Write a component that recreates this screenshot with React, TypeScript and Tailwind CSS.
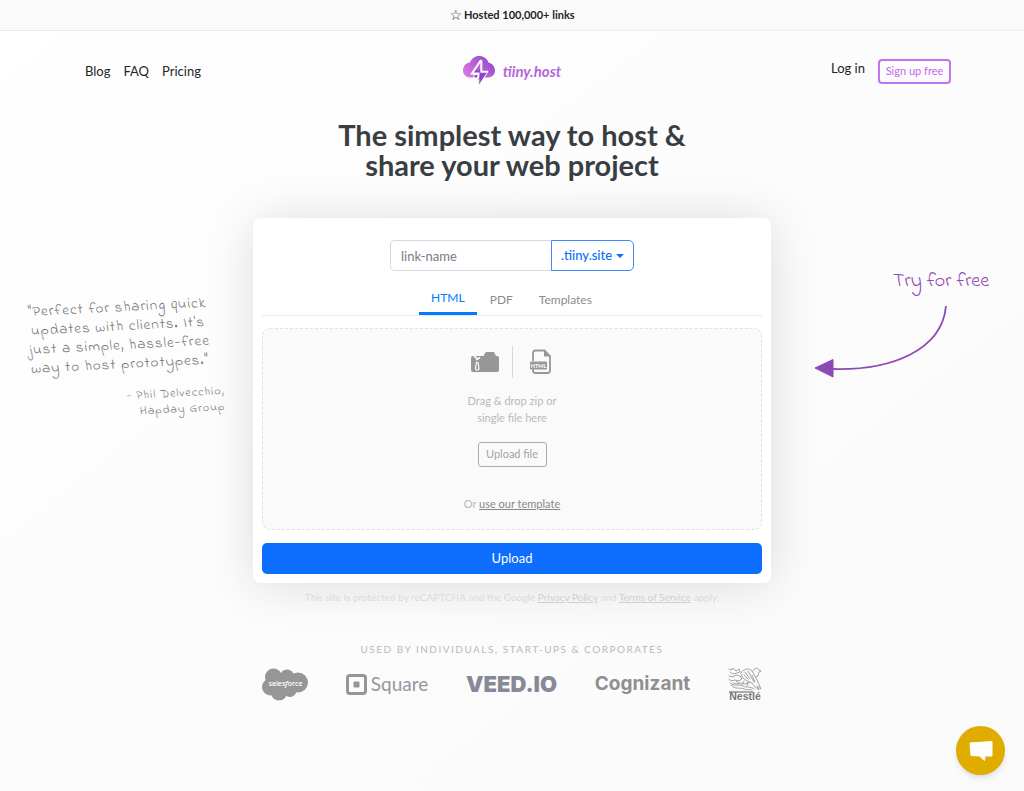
import type { ReactNode } from 'react'

const NAV_LINKS = ['Blog', 'FAQ', 'Pricing']

function CloudLogo() {
  return (
    <svg width="32" height="30" viewBox="0 0 32 30" aria-hidden="true">
      <defs>
        <linearGradient id="cloud" x1="0" y1="1" x2="1" y2="0.3">
          <stop offset="0" stopColor="#e07fe6" />
          <stop offset="1" stopColor="#9448c8" />
        </linearGradient>
        <linearGradient id="bolt" x1="0" y1="0" x2="0" y2="1">
          <stop offset="0.4" stopColor="#b966da" />
          <stop offset="0.6" stopColor="#9142c6" />
        </linearGradient>
      </defs>
      <path
        d="M7 21.500C3 21.500 0 18.500 0 14.500C0 10 3 7 7 6.500C8.500 2.500 12 0 16 0C20.500 0 24 2.500 25.500 6.500C29.500 7.500 32 11 32 14.500C32 18.500 29 21.500 25 21.500Z"
        fill="url(#cloud)"
      />
      <path d="M11 18.500H15.500L19 15.500H25L15.500 30L16 22H11Z" fill="#9142c6" stroke="#fdfdfd" strokeWidth="1" />
      <path d="M18.500 4L9 18H16L15.500 24L24 16H18.500Z" fill="url(#bolt)" />
      <path
        d="M18 4L9 17.500H15.500L15.200 22M18.300 4V15.800H25"
        fill="none"
        stroke="#fdfdfd"
        strokeWidth="2"
      />
    </svg>
  )
}

function ZipIcon() {
  return (
    <svg width="28" height="22" viewBox="0 0 28 22" aria-hidden="true">
      <path
        d="M2 5H13V3.500L15 1H23L25 5H26Q28 5 28 7V19Q28 21 26 21H2Q0 21 0 19V7Q0 5 2 5Z"
        fill="#979797"
      />
      <path d="M3 5.500L6 7M9 6.500L5 9" stroke="#fafafa" strokeWidth="1.800" fill="none" />
      <path d="M5.500 11.500H7L8 17Q8 19 6.200 19Q4.500 19 4.500 17Z" fill="none" stroke="#fafafa" strokeWidth="1.200" />
    </svg>
  )
}

function HtmlIcon() {
  return (
    <svg width="22" height="26" viewBox="0 0 22 26" aria-hidden="true">
      <path
        d="M3 12V4Q3 1.500 5.500 1.500H14.500L20 7V21.500Q20 24 17.500 24H5.500Q3 24 3 21.500V20"
        fill="none"
        stroke="#979797"
        strokeWidth="1.800"
      />
      <path d="M14 1V7.500H20.500Z" fill="#979797" />
      <rect x="0" y="12.500" width="17" height="8" rx="1" fill="#979797" />
      <text x="8.500" y="18.500" textAnchor="middle" fontSize="5.500" fontWeight="900" fontFamily="Lato" fill="#fafafa">
        HTML
      </text>
    </svg>
  )
}

function Arrow() {
  return (
    <svg width="135" height="74" viewBox="0 0 135 74" aria-hidden="true">
      <path d="M132 0C128 44 78 65 17 63" fill="none" stroke="#8e48b3" strokeWidth="1.800" />
      <path d="M1 62L19 53.500V71Z" fill="#8e48b3" stroke="#8e48b3" strokeLinejoin="round" />
    </svg>
  )
}

function Salesforce() {
  return (
    <svg width="46" height="33" viewBox="0 0 46 33" role="img" aria-label="Salesforce">
      <g fill="#969696">
        <circle cx="11.500" cy="9" r="8.500" />
        <circle cx="25" cy="8.500" r="7" />
        <circle cx="36" cy="14.500" r="10" />
        <circle cx="8.500" cy="19" r="8.500" />
        <circle cx="17" cy="24.500" r="8" />
        <circle cx="28" cy="22.500" r="6.500" />
        <rect x="10" y="8" width="24" height="16" />
      </g>
      <text x="23.500" y="17.500" textAnchor="middle" fontSize="7" fontFamily="Open Sans" fontWeight="600" fill="#fff">
        sales<tspan fontStyle="italic">f</tspan>orce
      </text>
    </svg>
  )
}

function SquareLogo() {
  return (
    <div className="flex items-center gap-1 font-[Lato] text-[19px] leading-6 text-[#94979a]">
      <svg width="21" height="21" viewBox="0 0 21 21" aria-hidden="true">
        <rect x="1.500" y="1.500" width="18" height="18" rx="2.500" fill="none" stroke="currentColor" strokeWidth="3" />
        <rect x="7.500" y="7.500" width="6" height="6" rx="1" fill="currentColor" />
      </svg>
      Square
    </div>
  )
}

function Nestle() {
  return (
    <svg width="34" height="34" viewBox="0 0 34 34" role="img" aria-label="Nestle">
      <g fill="none" stroke="#999" strokeWidth="0.900" strokeLinecap="round" strokeLinejoin="round">
        <path d="M1 2L4 3L5 1L8 4L11 2L12 5L9 6L5 7L2 5M1 9L5 10L8 8L12 9L14 12L11 14L7 13L3 14L1 12" />
        <path d="M13 6C15 2 20 1 23 3L26 7L29 13L33 22L29 19L31 23L27 20L24 16L19 14L15 11Z" />
        <path d="M17 5L22 12M20 4L26 15M16 8L20 12M24 8L27 15" />
        <path d="M25 4C26 1 30 0 31 3L33 4L31 5L30 9L28 10" />
        <path d="M2 16C6 20 11 17 15 19S22 19 26 22M3 18C7 23 12 20 16 22S21 21 24 23M5 16L9 17L13 16L17 17L21 16M8 14L12 17M16 14L14 18M20 15L19 19" />
      </g>
      <text x="17" y="33" textAnchor="middle" fontSize="10.500" fontWeight="700" fontFamily="Liberation Sans" fill="#777">
        Nestlé
      </text>
      <path d="M1 25H25" stroke="#777" strokeWidth="1.200" />
    </svg>
  )
}

function Tab({ active = false, children }: { active?: boolean; children: ReactNode }) {
  return (
    <button
      type="button"
      role="tab"
      aria-selected={active}
      className={
        active
          ? 'h-[31px] border-b-[3px] border-[#007bff] px-3 text-[#007bff]'
          : 'h-[31px] px-[13px] text-[#8c8c8c]'
      }
    >
      {children}
    </button>
  )
}

function UploadCard() {
  return (
    <form
      className="rounded-lg bg-white px-[9px] pt-[22px] pb-[9px] shadow-[0_2px_50px_rgba(0,0,0,0.13)]"
      onSubmit={(e) => e.preventDefault()}
    >
      {/* link name + domain */}
      <div className="flex justify-center text-[13px]">
        <input
          aria-label="Link name"
          placeholder="link-name"
          className="h-[31px] w-[161px] rounded-l-[5px] border border-r-0 border-[#d5dae0] px-[10px] outline-none placeholder:text-[#747c84]"
        />
        <button
          type="button"
          className="flex h-[31px] w-[83px] items-center justify-center gap-1 rounded-r-[5px] border border-[#3b8bff] font-medium text-[#0d6efd]"
        >
          .tiiny.site
          <span className="border-x-4 border-t-4 border-x-transparent border-t-current" />
        </button>
      </div>

      <div role="tablist" className="mt-[13px] flex justify-center border-b border-[#e8eaec] text-xs">
        <Tab active>HTML</Tab>
        <Tab>PDF</Tab>
        <Tab>Templates</Tab>
      </div>

      {/* drop zone */}
      <div className="mt-3 flex h-[202px] flex-col items-center rounded-lg border border-dashed border-[#e2e2e2] bg-[#fafafa] pt-[17px] text-[11px] text-[#b9b9b9]">
        <div className="flex h-8 items-center pr-0.5">
          <ZipIcon />
          <span className="mr-[17px] ml-[13px] h-8 border-l border-[#d9d9d9]" />
          <HtmlIcon />
        </div>
        <p className="mt-[14px] text-center leading-[17px]">
          Drag &amp; drop zip or
          <br />
          single file here
        </p>
        <button
          type="button"
          className="mt-4 h-[25px] w-[69px] rounded-[3px] border border-[#acacac] text-[#a3a3a3]"
        >
          Upload file
        </button>
        <p className="mt-[29px] leading-4">
          Or{' '}
          <a href="#template" className="text-[#888] underline">
            use our template
          </a>
        </p>
      </div>

      <button type="submit" className="mt-[13px] h-[31px] w-full rounded-[5px] bg-[#0d6efd] text-[13px] text-white">
        Upload
      </button>
    </form>
  )
}

export default function App() {
  return (
    <div className="min-h-screen overflow-x-hidden bg-linear-to-br from-white via-[#fcfcfc] to-[#fafafa] font-[Lato,sans-serif] text-[#212529]">
      <div className="flex h-[31px] items-center justify-center gap-0.5 border-b border-[#ebebeb] bg-[#fafafa] text-[11px] font-bold">
        <span className="font-['DejaVu_Sans'] text-sm leading-4 font-normal">☆</span>
        Hosted 100,000+ links
      </div>

      <header className="grid grid-cols-[1fr_auto_1fr] items-center px-[73px] pt-[25px] text-[13px]">
        <nav className="flex gap-[13px] pt-0.5 pl-3">
          {NAV_LINKS.map((link) => (
            <a key={link} href={`#${link.toLowerCase()}`}>
              {link}
            </a>
          ))}
        </nav>
        <a href="#home" className="flex items-center gap-2 text-[15px] font-bold text-[#b565dc] italic">
          <CloudLogo />
          tiiny.host
        </a>
        <div className="flex items-center justify-end gap-[13px]">
          <a href="#login" className="pb-1">
            Log in
          </a>
          <button type="button" className="h-[25px] w-[73px] rounded-[4px] border-2 border-[#c472ee] text-[11px] text-[#c266ef]">
            Sign up free
          </button>
        </div>
      </header>

      <h1 className="mt-[34px] text-center text-[29px] leading-[30px] font-bold text-[#3a3e43]">
        The simplest way to host &amp;
        <br />
        share your web project
      </h1>

      <div className="mt-[38px] grid grid-cols-[1fr_518px_1fr]">
        <aside className="flex justify-end pt-20 pr-[26px]">
          <figure className="w-[193px] -rotate-3 font-['Indie_Flower','Noto_Sans',sans-serif] tracking-[1px] text-[#777]">
            <blockquote className="w-[180px] text-center text-[15px] leading-[19px] whitespace-nowrap">
              "Perfect for sharing quick
              <br />
              updates with clients. It's
              <br />
              just a simple, hassle-free
              <br />
              way to host prototypes."
            </blockquote>
            <figcaption className="mt-[14px] text-right text-xs leading-4">
              - Phil Delvecchio,
              <br />
              Hapday Group
            </figcaption>
          </figure>
        </aside>

        <main>
          <UploadCard />
        </main>

        <aside className="flex flex-col pt-[50px] pl-[43px] text-[#8e48b3]">
          <p className="pl-[79px] font-['Indie_Flower','Noto_Sans',sans-serif] text-xl leading-7">Try for free</p>
          <div className="mt-[10px]">
            <Arrow />
          </div>
        </aside>
      </div>

      <p className="mt-[7px] text-center text-[10px] leading-[14px] text-[#dadada]">
        This site is protected by reCAPTCHA and the Google{' '}
        <a href="#privacy" className="text-[#cfcfcf] underline">
          Privacy Policy
        </a>{' '}
        and{' '}
        <a href="#terms" className="text-[#cfcfcf] underline">
          Terms of Service
        </a>{' '}
        apply.
      </p>

      <section className="mx-auto mt-[37px] max-w-[500px]">
        <h2 className="text-center text-[10px] leading-4 tracking-[0.15em] text-[#b9b9b9] uppercase">
          Used by individuals, start-ups &amp; corporates
        </h2>
        <div className="mt-[9px] flex h-9 items-center justify-between">
          <Salesforce />
          <SquareLogo />
          <span className="font-[Inter,sans-serif] text-[22px] leading-6 font-black text-[#858a96]">VEED.IO</span>
          <span className="font-[Inter,sans-serif] text-[19px] leading-6 font-bold text-[#8f8f8f]">Cognizant</span>
          <Nestle />
        </div>
      </section>

      <button
        type="button"
        aria-label="Open chat"
        className="fixed right-[19px] bottom-4 flex size-[49px] items-center justify-center rounded-full bg-[#e0ac00] shadow-md"
      >
        <svg width="24" height="20" viewBox="0 0 24 20" aria-hidden="true">
          <path d="M1 2L23 0.500V15H16L15.500 19.500L10.500 15L2 14.500Z" fill="#fff" stroke="#fff" strokeLinejoin="round" />
        </svg>
      </button>
    </div>
  )
}
